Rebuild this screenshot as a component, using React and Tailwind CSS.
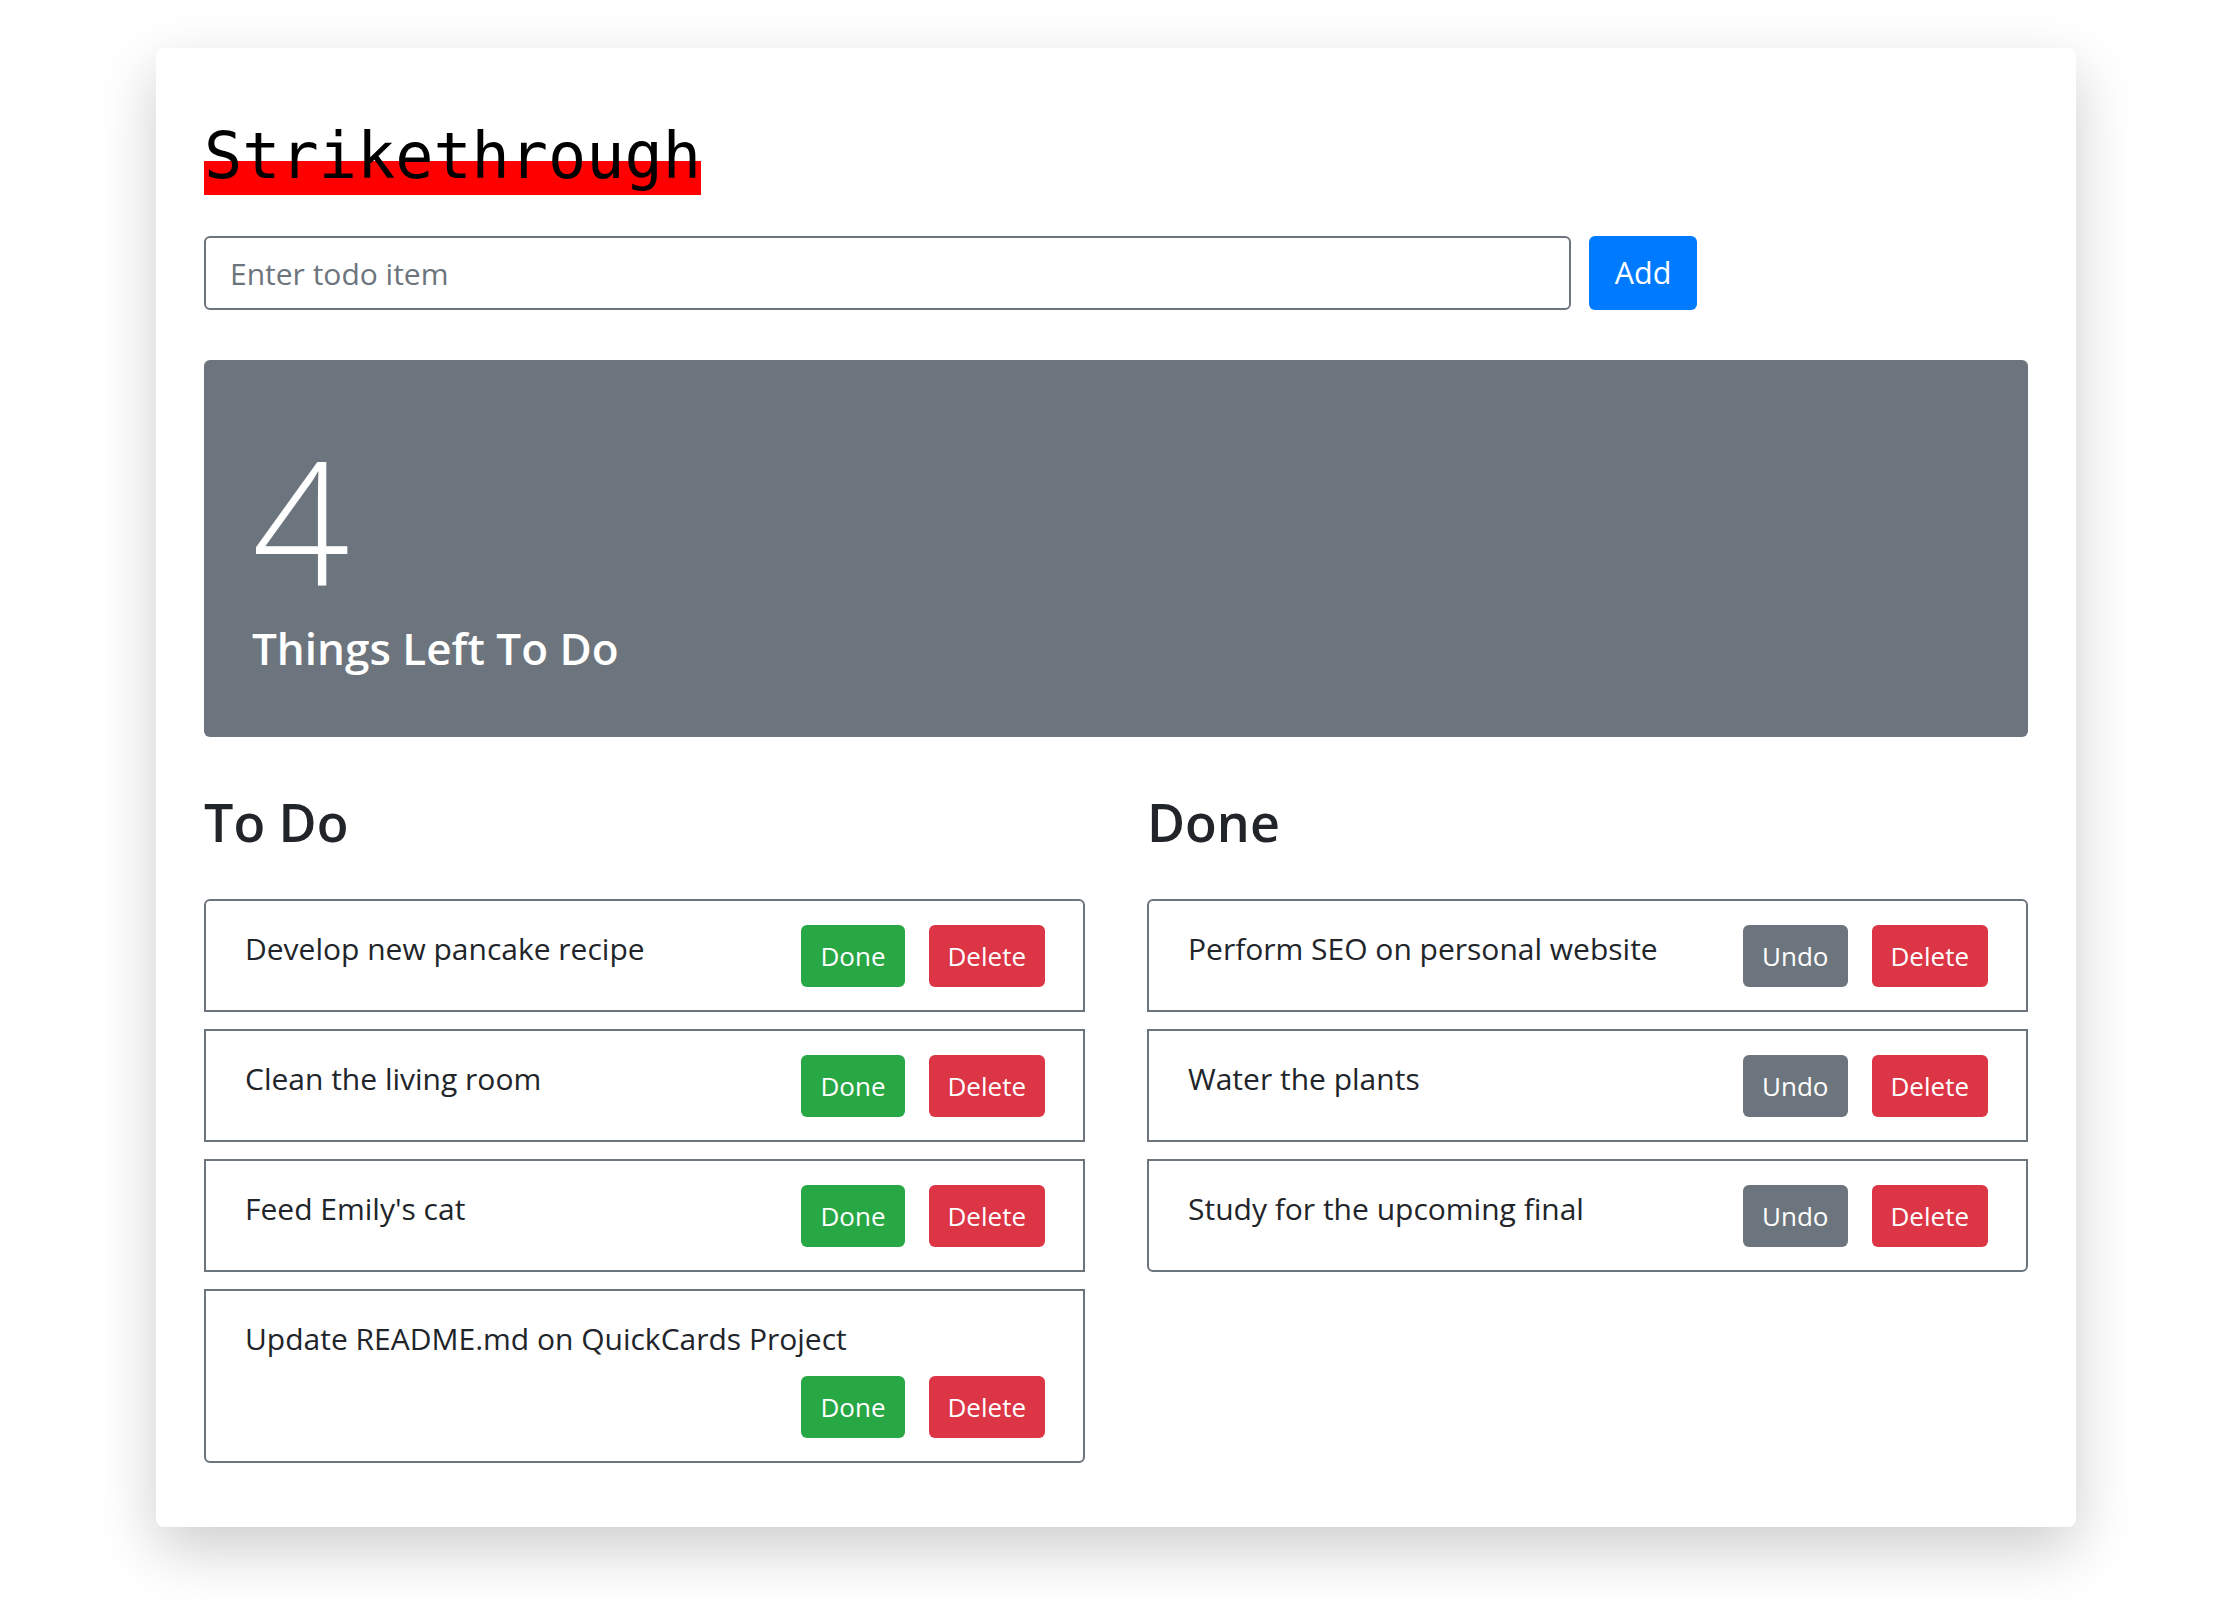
const todos = [
  "Develop new pancake recipe",
  "Clean the living room",
  "Feed Emily's cat",
  "Update README.md on QuickCards Project",
];

const done = [
  "Perform SEO on personal website",
  "Water the plants",
  "Study for the upcoming final",
];

function Item({ text, first, last, isDone }) {
  return (
    <li
      className={
        "flex flex-wrap items-start justify-between gap-y-[14px] border-2 border-[#6c757d] bg-white pl-[39px] pr-[38px] pt-[24px] pb-[23px] " +
        (first ? "rounded-t-[6px] " : "") +
        (last ? "rounded-b-[6px]" : "")
      }
    >
      <span className="mt-[1px] text-[30px] leading-[46px] text-[#212529]">{text}</span>
      <div className="ml-auto flex gap-[24px]">
        {isDone ? (
          <button className="h-[62px] rounded-[6px] bg-[#6c757d] px-[19px] text-[26px] text-white">
            Undo
          </button>
        ) : (
          <button className="h-[62px] rounded-[6px] bg-[#28a745] px-[19px] text-[26px] text-white">
            Done
          </button>
        )}
        <button className="h-[62px] rounded-[6px] bg-[#dc3545] px-[19px] text-[26px] text-white">
          Delete
        </button>
      </div>
    </li>
  );
}

function Column({ title, items, isDone }) {
  return (
    <div>
      <h2 className="mb-[45px] text-[52px] font-semibold leading-[64px] text-[#212529]">{title}</h2>
      <ul className="flex flex-col gap-[17px]">
        {items.map((t, i) => (
          <Item
            key={t}
            text={t}
            first={i === 0}
            last={i === items.length - 1}
            isDone={isDone}
          />
        ))}
      </ul>
    </div>
  );
}

export default function App() {
  return (
    <div className="min-h-screen bg-white pt-[48px] pb-[94px] font-['Open_Sans',sans-serif]">
      <div className="mx-auto w-[1920px] rounded-[8px] bg-white px-[48px] pt-[70px] pb-[64px] shadow-[0_22px_60px_rgba(0,0,0,0.2)]">
        <h1 className="font-['DejaVu_Sans_Mono',monospace] text-[63.5px] leading-[76px] text-black">
          <span className="bg-[linear-gradient(transparent_55%,#ff0000_55%)] pb-[2px]">Strikethrough</span>
        </h1>

        <div className="mt-[42px] flex gap-[18px]">
          <input
            className="h-[74px] w-[1367px] rounded-[6px] border-2 border-[#6c757d] pl-[24px] text-[30px] text-[#212529] outline-none placeholder:text-[#6c757d]"
            placeholder="Enter todo item"
          />
          <button className="h-[74px] w-[108px] rounded-[6px] bg-[#007bff] text-[30.5px] text-white">
            Add
          </button>
        </div>

        <div className="mt-[50px] h-[377px] rounded-[6px] bg-[#6c757d] px-[48px] pt-[73px] text-white">
          <div className="text-[171px] font-light leading-[171px]">4</div>
          <div className="mt-[17px] text-[44px] font-semibold leading-[55px]">Things Left To Do</div>
        </div>

        <div className="mt-[53px] grid grid-cols-2 gap-x-[62px]">
          <Column title="To Do" items={todos} isDone={false} />
          <Column title="Done" items={done} isDone={true} />
        </div>
      </div>
    </div>
  );
}
